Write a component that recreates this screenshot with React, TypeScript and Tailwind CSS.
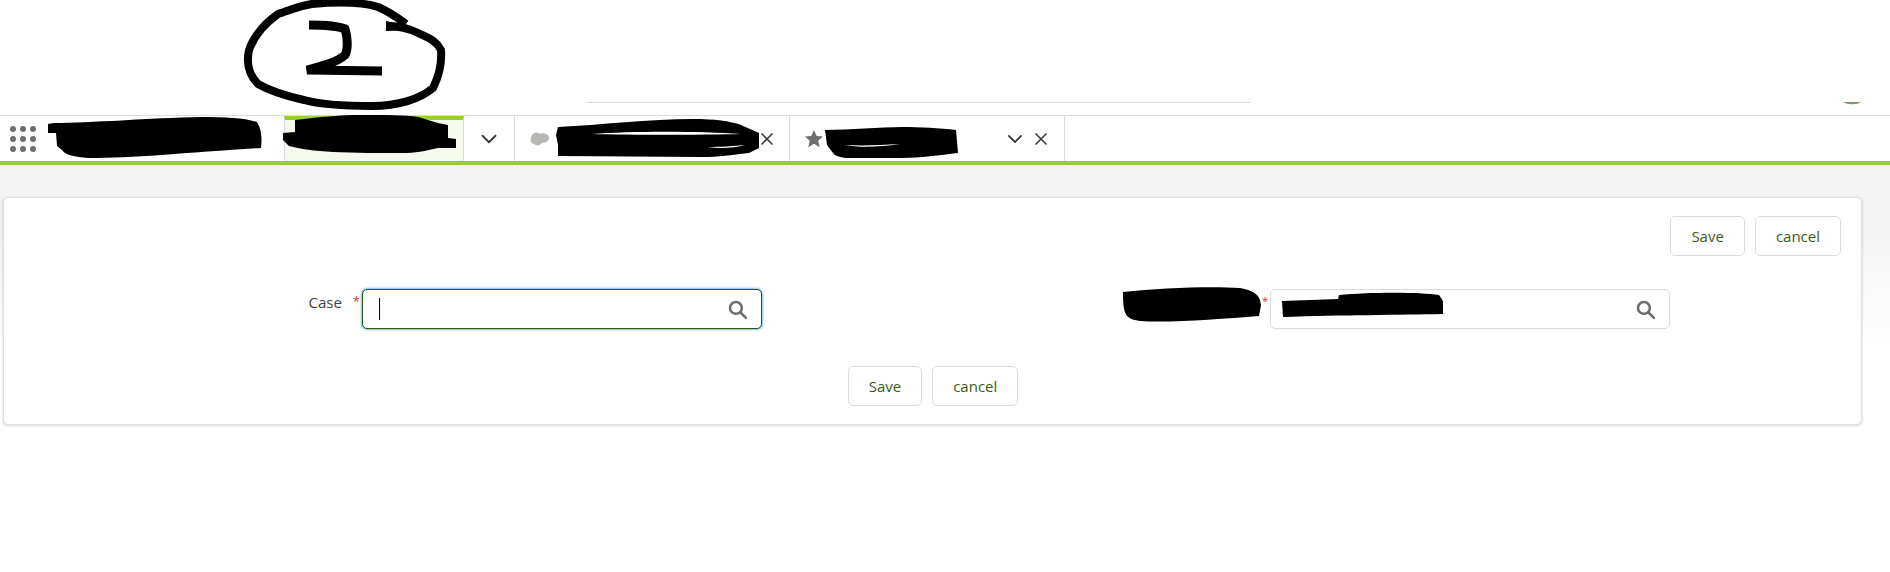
import { ChevronDown, X } from "lucide-react";

const font = "font-['Open_Sans','Liberation_Sans',sans-serif]";

// redaction marks drawn over the screenshot
function Scribbles() {
  return (
    <svg className="pointer-events-none absolute left-0 top-0" width={1890} height={572} viewBox="0 0 1890 572">
      {/* circled 2 */}
      <path
        d="M406 24C398 18 388 11 378 7C362 2 335 2 312 4C298 6 288 11 278 14C264 24 254 36 249 50C246 64 250 76 258 84C272 92 286 96 304 100C322 105 345 106 372 106C398 106 420 99 433 88C439 76 442 62 441 50C436 40 428 38 418 33C408 28 398 26 388 26"
        fill="none"
        stroke="#000"
        strokeWidth="8"
        strokeLinejoin="round"
      />
      <path d="M309 25C325 25 338 26 345 29C348 38 348 50 345 55C336 63 322 66 307 70L382 71" fill="none" stroke="#000" strokeWidth="9" />
      <path d="M386 21L408 26L408 30L386 31Z" fill="#000" />
      {/* launcher name */}
      <path d="M54 123C90 123 150 118 201 117C225 117 245 118 257 122C262 130 262 140 261 148C230 150 190 153 161 155C135 157 110 158 88 158C75 157 65 155 62 150L57 146L56 133L48 133L48 124Z" fill="#000" />
      {/* active tab */}
      <path d="M295 120C320 117 340 115 362 115C385 115 405 115 418 117L438 123L448 125L448 138L456 139L456 148L438 148C425 151 415 153 402 153C380 153 355 153 333 152C315 151 300 149 289 146L283 140L283 133L295 132Z" fill="#000" />
      {/* third tab */}
      <path d="M558 127C600 125 650 119 693 119C715 119 730 121 741 125L759 133L759 148L749 153C730 155 720 157 701 157L558 156L558 145L556 135Z" fill="#000" />
      <path d="M592 134C630 131 700 131 741 134C700 135 630 135 592 134Z" fill="#fff" />
      <path d="M708 147C720 147 735 146 745 145C735 148 720 149 708 147Z" fill="#fff" />
      {/* fourth tab */}
      <path d="M825 130C850 130 880 127 902 127C920 127 940 128 956 130L958 153C940 155 920 158 902 158L845 158C840 157 835 156 833 153L827 145Z" fill="#000" />
      <path d="M845 145C865 146 880 145 900 144C880 147 860 148 845 145Z" fill="#fff" />
      {/* right field label */}
      <path d="M1123 292C1160 288 1210 286 1240 288C1255 291 1260 295 1261 305L1259 316C1220 319 1170 323 1140 321C1125 319 1123 314 1123 292Z" fill="#000" />
      {/* right field value */}
      <path d="M1282 301L1338 299L1339 295C1370 292 1420 292 1439 295L1443 301L1443 314C1400 315 1340 315 1283 317Z" fill="#000" />
      {/* avatar sliver */}
      <path d="M1843 102L1861 102C1857 105 1848 105 1843 102Z" fill="#7c9a5a" />
    </svg>
  );
}

function AppDots() {
  return (
    <div className="grid grid-cols-3 gap-[4px]">
      {Array.from({ length: 9 }).map((_, i) => (
        <span key={i} className="h-[6px] w-[6px] rounded-full bg-[#706e6b]" />
      ))}
    </div>
  );
}

function Btn({ label }: { label: string }) {
  return (
    <button className="flex h-10 items-center rounded-[5px] border border-[#dddbda] bg-white px-[20px] text-[15px] text-[#3e5a17]">
      {label}
    </button>
  );
}

function SearchIcon() {
  return (
    <svg width="19" height="19" viewBox="0 0 18 18" fill="none" stroke="#706e6b" strokeWidth="2.4">
      <circle cx="7.5" cy="7.5" r="5.6" />
      <path d="M11.6 11.6L17 17" strokeLinecap="round" />
    </svg>
  );
}

function Lookup({ focused }: { focused?: boolean }) {
  return (
    <div
      className={
        focused
          ? "flex h-10 w-[400px] items-center justify-between rounded-[5px] border border-[#2e5010] bg-white pl-[16px] pr-[14px] shadow-[0_0_3px_#0070d2]"
          : "flex h-10 w-[400px] items-center justify-end rounded-[5px] border border-[#dddbda] bg-white pl-[16px] pr-[14px]"
      }
    >
      {focused && <span className="h-[22px] w-px bg-black" />}
      <SearchIcon />
    </div>
  );
}

export default function App() {
  return (
    <div className={`relative h-[572px] w-[1890px] overflow-hidden bg-white ${font}`}>
      <div className="h-[115px]">
        <div className="ml-[586px] pt-[102px]">
          <div className="h-px w-[664px] bg-[#dddbda]" />
        </div>
      </div>

      <nav className="flex h-[50px] border-b-4 border-t border-b-[#9acd32] border-t-[#dddbda] bg-white">
        <div className="flex w-[284px] items-center pl-[10px]">
          <AppDots />
        </div>
        <div className="w-[180px] border-x border-t-4 border-x-[#dddbda] border-t-[#9acd32] bg-[#f5f8ec]" />
        <div className="flex w-[51px] items-center justify-center border-r border-[#dddbda] text-[#3e3e3c]">
          <ChevronDown size={26} strokeWidth={1.8} />
        </div>
        <div className="flex w-[275px] items-center justify-between border-r border-[#dddbda] pl-[15px] pr-[12px] text-[#3e3e3c]">
          <svg width="20" height="14" viewBox="0 0 20 14">
            <path d="M3 2C6 0 9 1 10 2C13 0 18 2 19 5C20 8 16 11 12 11C10 14 6 14 4 12C1 12 0 8 1 6C1 4 2 3 3 2Z" fill="#b8b6b3" />
          </svg>
          <X size={20} />
        </div>
        <div className="flex w-[275px] items-center border-r border-[#dddbda] pl-[14px] pr-[13px] text-[#3e3e3c]">
          <svg width="20" height="20" viewBox="0 0 20 20">
            <path d="M10 1l2.7 6 6.3.6-4.8 4.2 1.5 6.4L10 14.8l-5.7 3.4 1.5-6.4L1 7.6 7.3 7z" fill="#706e6b" />
          </svg>
          <ChevronDown size={24} strokeWidth={1.8} className="ml-auto" />
          <X size={20} className="ml-[4px]" />
        </div>
      </nav>

      <main className="h-[407px] bg-gradient-to-b from-[#f3f3f3] from-[15%] to-white to-[45%] pl-[3px] pt-[32px]">
        <section className="h-[228px] w-[1859px] rounded-[5px] border border-[#e0e0e0] bg-white pl-[21px] pr-[20px] pt-[18px] shadow-[0_1px_3px_rgba(0,0,0,0.18)]">
          <div className="flex justify-end gap-[10px]">
            <Btn label="Save" />
            <Btn label="cancel" />
          </div>
          <div className="mt-[33px] flex">
            <div className="flex w-[737px] items-start justify-end">
              <label className="mr-[11px] mt-[2px] text-[15px] text-[#3e3e3c]">Case</label>
              <span className="mr-[2px] mt-[3px] text-[13px] text-[#c23934]">*</span>
              <Lookup focused />
            </div>
            <div className="ml-[500px] flex items-start">
              <span className="mt-[6px] w-[6px] text-[11px] leading-none text-[#c23934]">*</span>
              <div className="ml-[2px]">
                <Lookup />
              </div>
            </div>
          </div>
          <div className="mt-[37px] flex justify-center gap-[10px]">
            <Btn label="Save" />
            <Btn label="cancel" />
          </div>
        </section>
      </main>

      <Scribbles />
    </div>
  );
}
